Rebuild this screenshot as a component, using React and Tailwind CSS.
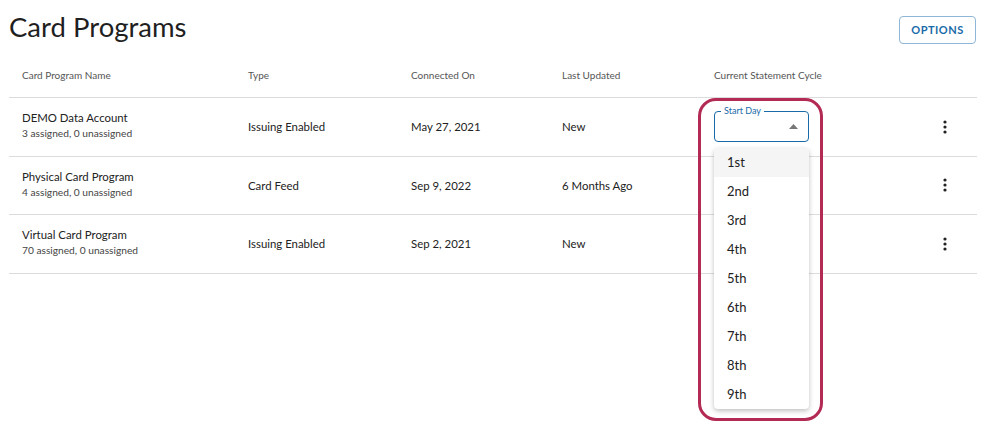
import React from 'react';

const rows = [
  { name: 'DEMO Data Account', sub: '3 assigned, 0 unassigned', type: 'Issuing Enabled', connected: 'May 27, 2021', updated: 'New', select: true },
  { name: 'Physical Card Program', sub: '4 assigned, 0 unassigned', type: 'Card Feed', connected: 'Sep 9, 2022', updated: '6 Months Ago' },
  { name: 'Virtual Card Program', sub: '70 assigned, 0 unassigned', type: 'Issuing Enabled', connected: 'Sep 2, 2021', updated: 'New' },
];

const days = ['1st', '2nd', '3rd', '4th', '5th', '6th', '7th', '8th', '9th'];

const Kebab = () => (
  <svg width="4" height="14" viewBox="0 0 4 14" className="text-[#222]">
    <circle cx="2" cy="2" r="1.6" fill="currentColor" />
    <circle cx="2" cy="7" r="1.6" fill="currentColor" />
    <circle cx="2" cy="12" r="1.6" fill="currentColor" />
  </svg>
);

const StartDay = () => (
  <div className="relative w-[95px]">
    {/* annotation ring */}
    <div className="absolute left-[-16px] top-[-13px] w-[125px] h-[323px] border-[3.5px] border-[#b32a55] rounded-[18px] pointer-events-none z-20" />
    <div className="relative h-[31px] border border-[#1a6aa8] rounded-[4px]">
      <span className="absolute left-[6px] top-[-7px] bg-white px-[3px] text-[9px] leading-[12px] text-[#1a6aa8]">Start Day</span>
      <svg className="absolute right-[10px] top-[12px]" width="9" height="5" viewBox="0 0 9 5">
        <path d="M0 5 L4.5 0 L9 5 Z" fill="#777" />
      </svg>
    </div>
    <div className="absolute left-0 top-[37px] w-[95px] bg-white rounded-[4px] shadow-[0_2px_5px_rgba(0,0,0,0.25)] z-10 overflow-hidden">
      {days.map((d, i) => (
        <div key={d} className={`h-[29px] flex items-center pl-[13px] text-[13px] text-[#222] ${i === 0 ? 'bg-[#f5f5f5]' : ''}`}>{d}</div>
      ))}
    </div>
  </div>
);

export default function App() {
  return (
    <div className="w-[991px] h-[437px] bg-white overflow-hidden font-['Lato','Liberation_Sans',sans-serif] text-[#222]">
      <div className="flex items-start justify-between pl-[9px] pr-[15px] pt-[10px]">
        <h1 className="text-[27.5px] leading-[34px] font-normal text-[#1f1f1f]">Card Programs</h1>
        <button className="mt-[6px] h-[28px] w-[77px] border border-[#8fb6d6] rounded-[4px] text-[11px] font-bold tracking-[0.5px] text-[#1a6aa8]">OPTIONS</button>
      </div>

      <div className="mx-[9px] w-[968px] mt-[13px]">
        <div className="flex items-center h-[41px] pb-[4px] pl-[13px] text-[10px] text-[#555] border-b border-[#dcdcdc]">
          <div className="w-[226px]">Card Program Name</div>
          <div className="w-[163px]">Type</div>
          <div className="w-[151px]">Connected On</div>
          <div className="w-[152px]">Last Updated</div>
          <div className="flex-1">Current Statement Cycle</div>
        </div>
        {rows.map((r) => (
          <div key={r.name} className="flex items-center h-[58.5px] pl-[13px] border-b border-[#dcdcdc]">
            <div className="w-[226px] -mt-[2px]">
              <div className="text-[11.4px] leading-[14px] text-[#222]">{r.name}</div>
              <div className="text-[10.2px] leading-[13px] mt-[2px] text-[#444]">{r.sub}</div>
            </div>
            <div className="w-[163px] text-[11.4px]">{r.type}</div>
            <div className="w-[151px] text-[11.4px]">{r.connected}</div>
            <div className="w-[152px] text-[11.4px]">{r.updated}</div>
            <div className="w-[229px] flex items-center">{r.select ? <StartDay /> : null}</div>
            <div className="flex items-center"><Kebab /></div>
          </div>
        ))}
      </div>
    </div>
  );
}
